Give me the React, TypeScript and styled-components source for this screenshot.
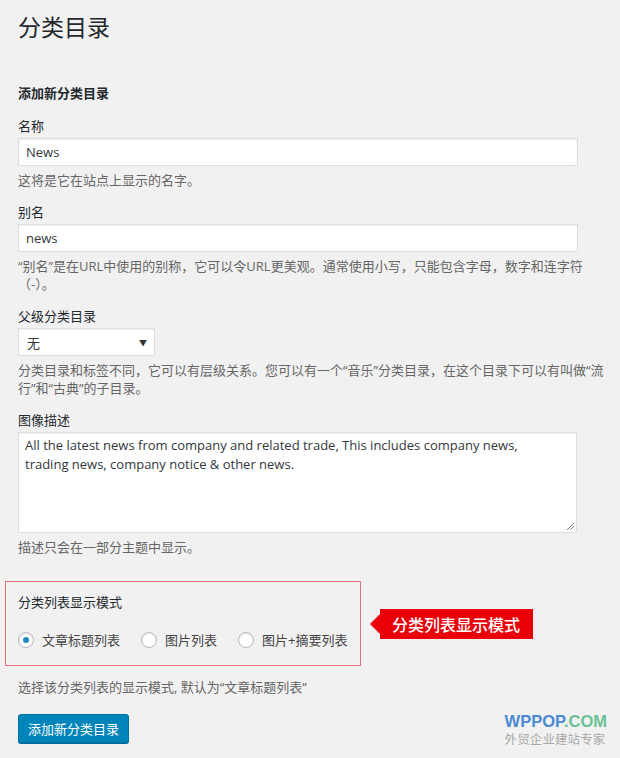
import React from 'react'
import styled, { createGlobalStyle } from 'styled-components'

const FONT = `"Open Sans", "Noto Sans CJK SC", sans-serif`
const WP_TEXT = '#23282d'
const WP_HELP = '#666'
const WP_BORDER = '#ddd'
const WP_BLUE = '#0085ba'

const GlobalStyle = createGlobalStyle`
  html, body {
    margin: 0;
    padding: 0;
    background: #f1f1f1;
  }
  body {
    font-family: ${FONT};
    font-size: 13px;
    color: #444;
  }
`

const Page = styled.div`
  position: relative;
  min-height: 758px;
  box-sizing: border-box;
  padding: 13px 0 0 18px;
`

const Title = styled.h1`
  margin: 0;
  font-size: 23px;
  line-height: 29px;
  font-weight: 400;
  color: ${WP_TEXT};
`

const SectionTitle = styled.h2`
  margin: 42px 0 14px;
  font-size: 13px;
  line-height: 19px;
  font-weight: 700;
  color: ${WP_TEXT};
`

const Field = styled.div`
  width: 560px;
  margin-bottom: 14px;
`

const Label = styled.label`
  display: block;
  font-size: 13px;
  line-height: 18px;
  color: ${WP_TEXT};
  margin-bottom: 3px;
`

const TextInput = styled.div`
  box-sizing: border-box;
  height: 28px;
  padding: 0 7px;
  display: flex;
  align-items: center;
  background: #fff;
  border: 1px solid ${WP_BORDER};
  box-shadow: inset 0 1px 2px rgba(0, 0, 0, 0.07);
  font-family: ${FONT};
  font-size: 13px;
  color: #32373c;
`

const Select = styled(TextInput)<{ $width: number }>`
  width: ${({ $width }) => $width}px;
  justify-content: space-between;
  padding: 0 7px 0 8px;
`

const Caret = styled.span`
  font-size: 8px;
  color: #333;
`

const TextArea = styled.div`
  box-sizing: border-box;
  position: relative;
  height: 101px;
  width: 559px;
  padding: 3px 6px;
  background: #fff;
  border: 1px solid ${WP_BORDER};
  box-shadow: inset 0 1px 2px rgba(0, 0, 0, 0.07);
  font-size: 13px;
  line-height: 19px;
  color: #32373c;
`

const ResizeGrip = styled.svg`
  position: absolute;
  right: 1px;
  bottom: 1px;
`

const Help = styled.p`
  width: 600px;
  margin: 5px 0 0;
  font-size: 13px;
  line-height: 18px;
  color: ${WP_HELP};
`

const ModeRow = styled.div`
  display: flex;
  align-items: center;
  gap: 9px;
  margin: 25px 0 0 -13px;
`

const ModeBox = styled.div`
  box-sizing: border-box;
  flex-shrink: 0;
  width: 356px;
  height: 85px;
  padding: 11px 12px 0;
  border: 1px solid #e4717a;
`

const ModeLabel = styled.div`
  font-size: 13px;
  line-height: 18px;
  color: ${WP_TEXT};
`

const Radios = styled.div`
  display: flex;
  align-items: center;
  margin-top: 20px;
`

const RadioOption = styled.label`
  display: flex;
  align-items: center;
  flex-shrink: 0;
  gap: 8px;
  margin-right: 21px;
  white-space: nowrap;
  font-size: 13px;
  line-height: 18px;
  color: #444;
`

const RadioCircle = styled.span<{ $checked?: boolean }>`
  box-sizing: border-box;
  width: 16px;
  height: 16px;
  border-radius: 50%;
  border: 1px solid #b4b9be;
  background: #fff;
  box-shadow: inset 0 1px 2px rgba(0, 0, 0, 0.1);
  display: flex;
  align-items: center;
  justify-content: center;
  &::after {
    content: '';
    display: ${({ $checked }) => ($checked ? 'block' : 'none')};
    width: 6px;
    height: 6px;
    border-radius: 50%;
    background: #1e8cbe;
  }
`

const Callout = styled.div`
  position: relative;
  flex-shrink: 0;
  height: 30px;
  margin-left: 10px;
  padding: 0 13px 0 12px;
  display: flex;
  align-items: center;
  background: #ea0009;
  color: #fff;
  font-size: 16px;
  font-weight: 500;
  &::before {
    content: '';
    position: absolute;
    left: -10px;
    top: 5px;
    border-top: 10px solid transparent;
    border-bottom: 10px solid transparent;
    border-right: 10px solid #ea0009;
  }
`

const ModeHelp = styled(Help)`
  margin-top: 12px;
`

const Button = styled.button`
  margin-top: 18px;
  box-sizing: border-box;
  height: 29px;
  padding: 0 9px;
  background: ${WP_BLUE};
  border: 1px solid #0073aa;
  border-radius: 3px;
  box-shadow: 0 1px 0 #006799;
  color: #fff;
  font-family: ${FONT};
  font-size: 13px;
`

const Watermark = styled.div`
  position: absolute;
  right: 13px;
  bottom: 9px;
  display: flex;
  flex-direction: column;
  align-items: flex-start;
`

const Brand = styled.span`
  font-family: "Liberation Sans", Arial, sans-serif;
  font-weight: 700;
  font-size: 16.5px;
  line-height: 19px;
  color: #4b8ad4;
`

const BrandTail = styled.span`
  color: #6cc196;
`

const Slogan = styled.span`
  font-size: 12.5px;
  line-height: 18px;
  color: #a9a9a9;
  letter-spacing: 0.1px;
`

const radioOptions = [
  { label: '文章标题列表', checked: true },
  { label: '图片列表' },
  { label: '图片+摘要列表' },
]

export default function App() {
  return (
    <Page>
      <GlobalStyle />
      <Title>分类目录</Title>
      <SectionTitle>添加新分类目录</SectionTitle>

      <Field>
        <Label>名称</Label>
        <TextInput>News</TextInput>
        <Help>这将是它在站点上显示的名字。</Help>
      </Field>

      <Field>
        <Label>别名</Label>
        <TextInput>news</TextInput>
        <Help>
          “别名”是在URL中使用的别称，它可以令URL更美观。通常使用小写，只能包含字母，数字和连字符<br />（-）。
        </Help>
      </Field>

      <Field>
        <Label>父级分类目录</Label>
        <Select $width={137}>
          <span>无</span>
          <Caret>▼</Caret>
        </Select>
        <Help>
          分类目录和标签不同，它可以有层级关系。您可以有一个“音乐”分类目录，在这个目录下可以有叫做“流<br />行”和“古典”的子目录。
        </Help>
      </Field>

      <Field>
        <Label>图像描述</Label>
        <TextArea>
          All the latest news from company and related trade, This includes company news,
          <br />
          trading news, company notice &amp; other news.
          <ResizeGrip width="10" height="10" viewBox="0 0 10 10">
            <path d="M9 2 L2 9 M9 5 L5 9" stroke="#888" strokeWidth="1" />
          </ResizeGrip>
        </TextArea>
        <Help>描述只会在一部分主题中显示。</Help>
      </Field>

      <ModeRow>
        <ModeBox>
          <ModeLabel>分类列表显示模式</ModeLabel>
          <Radios>
            {radioOptions.map((o) => (
              <RadioOption key={o.label}>
                <RadioCircle $checked={o.checked} />
                {o.label}
              </RadioOption>
            ))}
          </Radios>
        </ModeBox>
        <Callout>分类列表显示模式</Callout>
      </ModeRow>

      <ModeHelp>选择该分类列表的显示模式, 默认为“文章标题列表”</ModeHelp>
      <Button>添加新分类目录</Button>

      <Watermark>
        <Brand>
          WPPOP<BrandTail>.COM</BrandTail>
        </Brand>
        <Slogan>外贸企业建站专家</Slogan>
      </Watermark>
    </Page>
  )
}
